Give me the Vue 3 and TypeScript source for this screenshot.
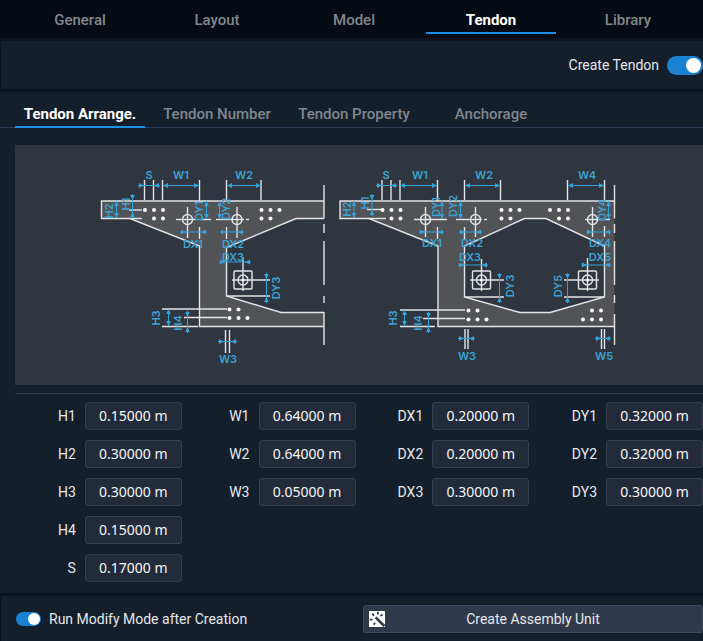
<script setup lang="ts">
import { ref } from 'vue'

type Point = [number, number]
type Segment = [number, number, number, number]

interface Dimension {
  line: Segment
  inward?: boolean
}

interface Label {
  text: string
  x: number
  y: number
  upright?: boolean
}

interface Field {
  name: string
  value: string
}

const mainTabs = ['General', 'Layout', 'Model', 'Tendon', 'Library']
const subTabs = ['Tendon Arrange.', 'Tendon Number', 'Tendon Property', 'Anchorage']
const activeMain = ref('Tendon')
const activeSub = ref('Tendon Arrange.')
const createTendon = ref(true)
const runModify = ref(true)

const columns = ref<Field[][]>([
  [
    { name: 'H1', value: '0.15000 m' },
    { name: 'H2', value: '0.30000 m' },
    { name: 'H3', value: '0.30000 m' },
    { name: 'H4', value: '0.15000 m' },
    { name: 'S', value: '0.17000 m' },
  ],
  [
    { name: 'W1', value: '0.64000 m' },
    { name: 'W2', value: '0.64000 m' },
    { name: 'W3', value: '0.05000 m' },
  ],
  [
    { name: 'DX1', value: '0.20000 m' },
    { name: 'DX2', value: '0.20000 m' },
    { name: 'DX3', value: '0.30000 m' },
  ],
  [
    { name: 'DY1', value: '0.32000 m' },
    { name: 'DY2', value: '0.32000 m' },
    { name: 'DY3', value: '0.30000 m' },
  ],
])

// White reference lines: ticks, leaders and the broken symmetry axes
const guides: Segment[] = [
  // end girder
  [144.5, 180, 144.5, 200], [153.5, 180, 153.5, 200], [162.5, 180, 162.5, 200],
  [199.5, 180, 199.5, 201], [226.5, 180, 226.5, 201], [261, 180, 261, 200],
  [129, 210, 142, 210], [130, 218.5, 142, 218.5],
  [176, 219.5, 195, 219.5], [201, 219.5, 211, 219.5], [187.5, 207, 187.5, 238],
  [216, 219.5, 244, 219.5], [246, 219.5, 249, 219.5], [237, 207, 237, 238],
  [199.5, 227, 199.5, 239], [226.5, 227, 226.5, 239],
  [232, 280, 270, 280], [243, 257, 243, 291], [226.5, 296, 270, 296],
  [162, 309, 227, 309], [184, 317.5, 227, 317.5], [162, 326.5, 198, 326.5],
  [225.5, 330, 225.5, 353], [229.5, 330, 229.5, 353],
  [324, 185, 324, 218.5], [324, 224, 324, 233], [324, 241, 324, 285],
  [324, 296, 324, 303], [324, 312, 324, 345],
  // middle girder
  [382, 180, 382, 200], [391, 180, 391, 200], [400, 180, 400, 200],
  [437.5, 180, 437.5, 201], [464.5, 180, 464.5, 200], [500.5, 180, 500.5, 200],
  [567.5, 180, 567.5, 200], [604.5, 180, 604.5, 201],
  [367, 209.5, 382, 209.5], [368, 218.5, 386, 218.5],
  [414, 219.5, 447, 219.5], [425.5, 207, 425.5, 237],
  [456, 219.5, 482, 219.5], [484, 219.5, 487, 219.5], [475.5, 207, 475.5, 237],
  [585, 219.5, 610, 219.5], [592.5, 207, 592.5, 237],
  [437.5, 227, 437.5, 239], [464.5, 227, 464.5, 239], [604.5, 226, 604.5, 237],
  [470, 280, 504, 280], [481.5, 259, 481.5, 291], [464.5, 297, 504, 297],
  [564, 280, 599, 280], [587.5, 258, 587.5, 291], [564, 297, 604, 297],
  [400, 310, 465, 310], [423, 318.5, 465, 318.5], [400, 326.5, 435, 326.5],
  [465, 329, 465, 349], [468, 329, 468, 349],
  [601.5, 329, 601.5, 349], [604.5, 329, 604.5, 349],
  [614.5, 185, 614.5, 218.5], [614.5, 224, 614.5, 233], [614.5, 241, 614.5, 285],
  [614.5, 295, 614.5, 303], [614.5, 314, 614.5, 345],
]

const dimensions: Dimension[] = [
  { line: [138, 185.5, 160, 185.5], inward: true },
  { line: [163, 185.5, 199, 185.5] },
  { line: [227, 185.5, 261, 185.5] },
  { line: [132.5, 194, 132.5, 218], inward: true },
  { line: [116.5, 201, 116.5, 218] },
  { line: [206.5, 201, 206.5, 219] },
  { line: [219.5, 201, 219.5, 219] },
  { line: [180, 232, 207, 232], inward: true },
  { line: [220, 232, 244, 232], inward: true },
  { line: [219, 262, 251, 262], inward: true },
  { line: [266.5, 273, 266.5, 303], inward: true },
  { line: [168.5, 309, 168.5, 326] },
  { line: [187.5, 311, 187.5, 333], inward: true },
  { line: [218, 341.5, 237, 341.5], inward: true },

  { line: [376, 185.5, 397, 185.5], inward: true },
  { line: [400, 185.5, 437, 185.5] },
  { line: [465, 185.5, 500, 185.5] },
  { line: [568, 185.5, 604, 185.5] },
  { line: [372, 194, 372, 216], inward: true },
  { line: [354, 201, 354, 218] },
  { line: [442, 201, 442, 219] },
  { line: [460.5, 201, 460.5, 219] },
  { line: [608.5, 201, 608.5, 219] },
  { line: [419, 232, 444, 232], inward: true },
  { line: [459, 232, 482, 232], inward: true },
  { line: [586, 232, 611, 232], inward: true },
  { line: [458, 265, 488, 265], inward: true },
  { line: [581, 265, 611, 265], inward: true },
  { line: [499.5, 273, 499.5, 303], inward: true },
  { line: [567.5, 273, 567.5, 303], inward: true },
  { line: [404.5, 310, 404.5, 326] },
  { line: [428.5, 312, 428.5, 333], inward: true },
  { line: [458, 338.5, 475, 338.5], inward: true },
  { line: [595, 338.5, 611, 338.5], inward: true },
]

function headAt(x: number, y: number, ux: number, uy: number): string {
  const bx = x - ux * 5
  const by = y - uy * 5
  return `M${x} ${y}L${bx - uy * 2.4} ${by + ux * 2.4}L${bx + uy * 2.4} ${by - ux * 2.4}Z`
}

function heads(d: Dimension): string {
  const [x1, y1, x2, y2] = d.line
  const length = Math.hypot(x2 - x1, y2 - y1)
  const ux = (x2 - x1) / length
  const uy = (y2 - y1) / length
  if (d.inward) {
    return headAt(x1 + ux * 6, y1 + uy * 6, ux, uy) + headAt(x2 - ux * 6, y2 - uy * 6, -ux, -uy)
  }
  return headAt(x1, y1, -ux, -uy) + headAt(x2, y2, ux, uy)
}

const ducts: Point[] = [
  [145, 210], [154, 210], [163, 210], [154, 218.5], [163, 218.5],
  [261.5, 210], [270.5, 210], [279.5, 210], [261.5, 218.5], [270.5, 218.5],
  [229.5, 309.5], [238.5, 309.5], [229.5, 318], [238.5, 318], [247.5, 318],
  [382.5, 210], [391.5, 210], [400.5, 210], [391.5, 218.5], [400.5, 218.5],
  [501.5, 210], [510.5, 210], [519.5, 210], [501.5, 218.5], [510.5, 218.5],
  [550, 210], [559, 210], [568, 210], [559, 218.5], [568, 218.5],
  [468.5, 310.5], [477.5, 310.5], [468.5, 319.5], [477.5, 319.5], [486.5, 319.5],
  [592, 310.5], [601, 310.5], [583, 319.5], [592, 319.5], [601, 319.5],
]

const rings: Point[] = [
  [187.5, 219.5], [237, 219.5], [425.5, 219.5], [475.5, 219.5], [592.5, 219.5],
  [243, 280], [481.5, 280], [587.5, 280],
]

const plates: Point[] = [[243, 280], [481.5, 280], [587.5, 280]]

const labels: Label[] = [
  { text: 'S', x: 149, y: 175 },
  { text: 'W1', x: 181, y: 175 },
  { text: 'W2', x: 244, y: 175 },
  { text: 'H2', x: 109, y: 211, upright: true },
  { text: 'H1', x: 126, y: 204, upright: true },
  { text: 'DY1', x: 199, y: 211, upright: true },
  { text: 'DY2', x: 226, y: 209, upright: true },
  { text: 'DX1', x: 193, y: 244 },
  { text: 'DX2', x: 233, y: 244 },
  { text: 'DX3', x: 233, y: 257 },
  { text: 'DY3', x: 276, y: 288, upright: true },
  { text: 'H3', x: 156, y: 318, upright: true },
  { text: 'H4', x: 178, y: 323, upright: true },
  { text: 'W3', x: 228, y: 359 },
  { text: 'S', x: 386, y: 175 },
  { text: 'W1', x: 420, y: 175 },
  { text: 'W2', x: 484, y: 175 },
  { text: 'W4', x: 587, y: 175 },
  { text: 'H2', x: 347, y: 209, upright: true },
  { text: 'H1', x: 365, y: 203, upright: true },
  { text: 'DY1', x: 436, y: 207, upright: true },
  { text: 'DY2', x: 453, y: 206, upright: true },
  { text: 'DY4', x: 602, y: 210, upright: true },
  { text: 'DX1', x: 432, y: 243 },
  { text: 'DX2', x: 472, y: 243 },
  { text: 'DX4', x: 600, y: 243 },
  { text: 'DX3', x: 470, y: 257 },
  { text: 'DX5', x: 600, y: 257 },
  { text: 'DY3', x: 510, y: 286, upright: true },
  { text: 'DY5', x: 558, y: 286, upright: true },
  { text: 'H3', x: 393, y: 318, upright: true },
  { text: 'H4', x: 418, y: 323, upright: true },
  { text: 'W3', x: 467, y: 356 },
  { text: 'W5', x: 604, y: 356 },
]
</script>

<template>
  <main class="app">
    <nav class="tabs main-tabs" aria-label="Sections">
      <button
        v-for="tab in mainTabs"
        :key="tab"
        type="button"
        class="tab"
        :class="{ active: tab === activeMain }"
        @click="activeMain = tab"
      >{{ tab }}</button>
    </nav>

    <section class="panel create-bar">
      <label for="create-tendon">Create Tendon</label>
      <input id="create-tendon" v-model="createTendon" type="checkbox" class="switch large" />
    </section>

    <section class="panel editor">
      <nav class="tabs sub-tabs" aria-label="Tendon pages">
        <button
          v-for="tab in subTabs"
          :key="tab"
          type="button"
          class="tab"
          :class="{ active: tab === activeSub }"
          @click="activeSub = tab"
        >{{ tab }}</button>
      </nav>

      <div class="figure">
        <svg class="drawing" viewBox="15 145 688 240">
          <g class="concrete">
            <path d="M101.5 201H324V218.5H296L226.5 247.5V296L281 312.5H324V326.5H199.5V246L130 218.5H101.5Z" />
            <path d="M340 201H614.5V326.5H438V246L369 218.5H340ZM464.5 246V297L520 312.5H550L604.5 297V246L546 218.5H524.5Z" />
          </g>
          <g class="outline">
            <path d="M324 201H101.5V218.5H130L199.5 246V326.5H324M324 312.5H281L226.5 296V247.5L296 218.5H324" />
            <path d="M614.5 201H340V218.5H369L438 246V326.5H614.5M464.5 246V297L520 312.5H550L604.5 297V246L546 218.5H524.5Z" />
            <line v-for="(g, i) in guides" :key="i" :x1="g[0]" :y1="g[1]" :x2="g[2]" :y2="g[3]" />
            <rect v-for="(p, i) in plates" :key="i" :x="p[0] - 9" :y="p[1] - 9" width="18" height="18" rx="1" />
            <circle v-for="(p, i) in rings" :key="i" :cx="p[0]" :cy="p[1]" r="5" />
          </g>
          <g class="ducts">
            <circle v-for="(p, i) in ducts" :key="i" :cx="p[0]" :cy="p[1]" r="2" />
            <circle v-for="(p, i) in plates" :key="'c' + i" :cx="p[0]" :cy="p[1]" r="1.6" />
          </g>
          <g class="dimensions">
            <template v-for="(d, i) in dimensions" :key="i">
              <line :x1="d.line[0]" :y1="d.line[1]" :x2="d.line[2]" :y2="d.line[3]" />
              <path :d="heads(d)" />
            </template>
          </g>
          <g class="labels">
            <text
              v-for="(l, i) in labels"
              :key="i"
              :transform="`translate(${l.x} ${l.y})${l.upright ? ' rotate(-90)' : ''}`"
              y="4"
            >{{ l.text }}</text>
          </g>
        </svg>
      </div>

      <hr class="divider" />

      <form class="fields" @submit.prevent>
        <div v-for="(column, c) in columns" :key="c" class="column">
          <div v-for="field in column" :key="field.name" class="field">
            <label :for="'field-' + field.name">{{ field.name }}</label>
            <input :id="'field-' + field.name" v-model="field.value" type="text" />
          </div>
        </div>
      </form>
    </section>

    <footer class="panel footer">
      <div class="option">
        <input id="run-modify" v-model="runModify" type="checkbox" class="switch" />
        <label for="run-modify">Run Modify Mode after Creation</label>
      </div>
      <button type="button" class="create">
        <svg class="wand" viewBox="0 0 16 16" aria-hidden="true">
          <rect width="16" height="16" fill="#fff" stroke="none" />
          <path d="M6.6 6.4 15.4 15" stroke-width="2.6" />
          <path
            d="M8.8 .8V3.4M3.2 2.6 5 4.6M13.6 3.6 11.4 5M.8 8.6H3.6M4.8 13.8 6 11.6"
            stroke-width="1.8"
          />
        </svg>
        <span>Create Assembly Unit</span>
      </button>
    </footer>
  </main>
</template>

<style>
body {
  margin: 0;
  background: #0b131c;
}
</style>

<style scoped>
.app {
  display: flex;
  flex-direction: column;
  gap: 3px;
  min-height: 100vh;
  overflow: hidden;
  box-sizing: border-box;
  color: #e6e8ea;
  font-family: Roboto, "Noto Sans", sans-serif;
  font-size: 14px;
  line-height: 20px;
}

.app button,
.app input {
  font: inherit;
  color: inherit;
}

.tabs {
  display: flex;
  gap: 7px;
  padding-left: 15px;
}

.tab {
  flex: 0 0 130px;
  padding: 0;
  border: 0;
  border-bottom: 2px solid transparent;
  background: none;
  cursor: pointer;
}

.app .tab {
  color: #81878d;
  font-size: 15px;
  font-weight: 500;
  white-space: nowrap;
}

.app .tab.active {
  border-color: #1d90ea;
  color: #fff;
  font-weight: 700;
}

.main-tabs {
  height: 38px;
  background: #050b12;
}

.main-tabs .tab {
  height: 34px;
  padding-top: 8px;
}

.panel {
  margin-left: 1px;
  background: #141f2c;
}

.create-bar {
  display: flex;
  align-items: center;
  justify-content: flex-end;
  gap: 8px;
  height: 48px;
}

.switch {
  appearance: none;
  display: flex;
  align-items: center;
  justify-content: flex-end;
  flex: none;
  box-sizing: border-box;
  width: 25px;
  height: 14px;
  margin: 0;
  padding: 1px;
  border-radius: 10px;
  background: #1b81d3;
  cursor: pointer;
}

.switch::before {
  content: "";
  width: 12px;
  height: 12px;
  border-radius: 50%;
  background: #fff;
}

.switch:not(:checked) {
  justify-content: flex-start;
  background: #4a5565;
}

.switch.large {
  width: 36px;
  height: 19px;
  padding: 2px;
}

.switch.large::before {
  width: 15px;
  height: 15px;
}

.editor {
  flex: 1;
  margin-left: 0;
}

.sub-tabs {
  height: 35px;
  border-bottom: 1px solid #333f57;
}

.sub-tabs .tab {
  height: 36px;
  padding-top: 10px;
}

.figure {
  margin: 17px 0 8px 15px;
  background: #30363f;
}

.drawing {
  display: block;
  width: 100%;
  height: auto;
}

.concrete {
  fill: #515356;
  fill-rule: evenodd;
}

.outline {
  fill: none;
  stroke: #e4e5e6;
  stroke-width: 1.4;
}

.ducts {
  fill: #fff;
}

.dimensions {
  fill: #35a3d9;
  stroke: #35a3d9;
}

.dimensions path {
  stroke: none;
}

.labels {
  fill: #3ba3d4;
  font-family: Inter, sans-serif;
  font-size: 11px;
  font-weight: 600;
  text-anchor: middle;
}

.divider {
  margin: 0 0 0 15px;
  border: 0;
  border-top: 1px solid #2a3747;
}

.fields {
  display: grid;
  grid-template-columns: repeat(4, 1fr);
  padding: 8px 0 11px 8px;
}

.column {
  display: flex;
  flex-direction: column;
  gap: 10px;
}

.field {
  display: flex;
  align-items: center;
  justify-content: flex-end;
  gap: 9px;
}

.field input {
  box-sizing: border-box;
  width: 97px;
  height: 28px;
  padding: 0 0 2px;
  border: 1px solid #333e50;
  border-radius: 3px;
  background: #232b3b;
  color: #f4f5f6;
  font-family: "Noto Sans", sans-serif;
  text-align: center;
}

.footer {
  display: grid;
  grid-template-columns: 1fr 1fr;
  gap: 7px;
  align-items: center;
  height: 46px;
  padding: 0 0 0 15px;
}

.option {
  display: flex;
  align-items: center;
  gap: 8px;
}

.create {
  display: grid;
  grid-template-columns: 16px 1fr 16px;
  align-items: center;
  height: 28px;
  padding: 0 5px;
  border: 1px solid #3d485b;
  border-radius: 3px;
  background: #2f394b;
  cursor: pointer;
}

.create span {
  text-align: center;
}

.wand {
  width: 16px;
  height: 16px;
  fill: none;
  stroke: #2f394b;
}
</style>
